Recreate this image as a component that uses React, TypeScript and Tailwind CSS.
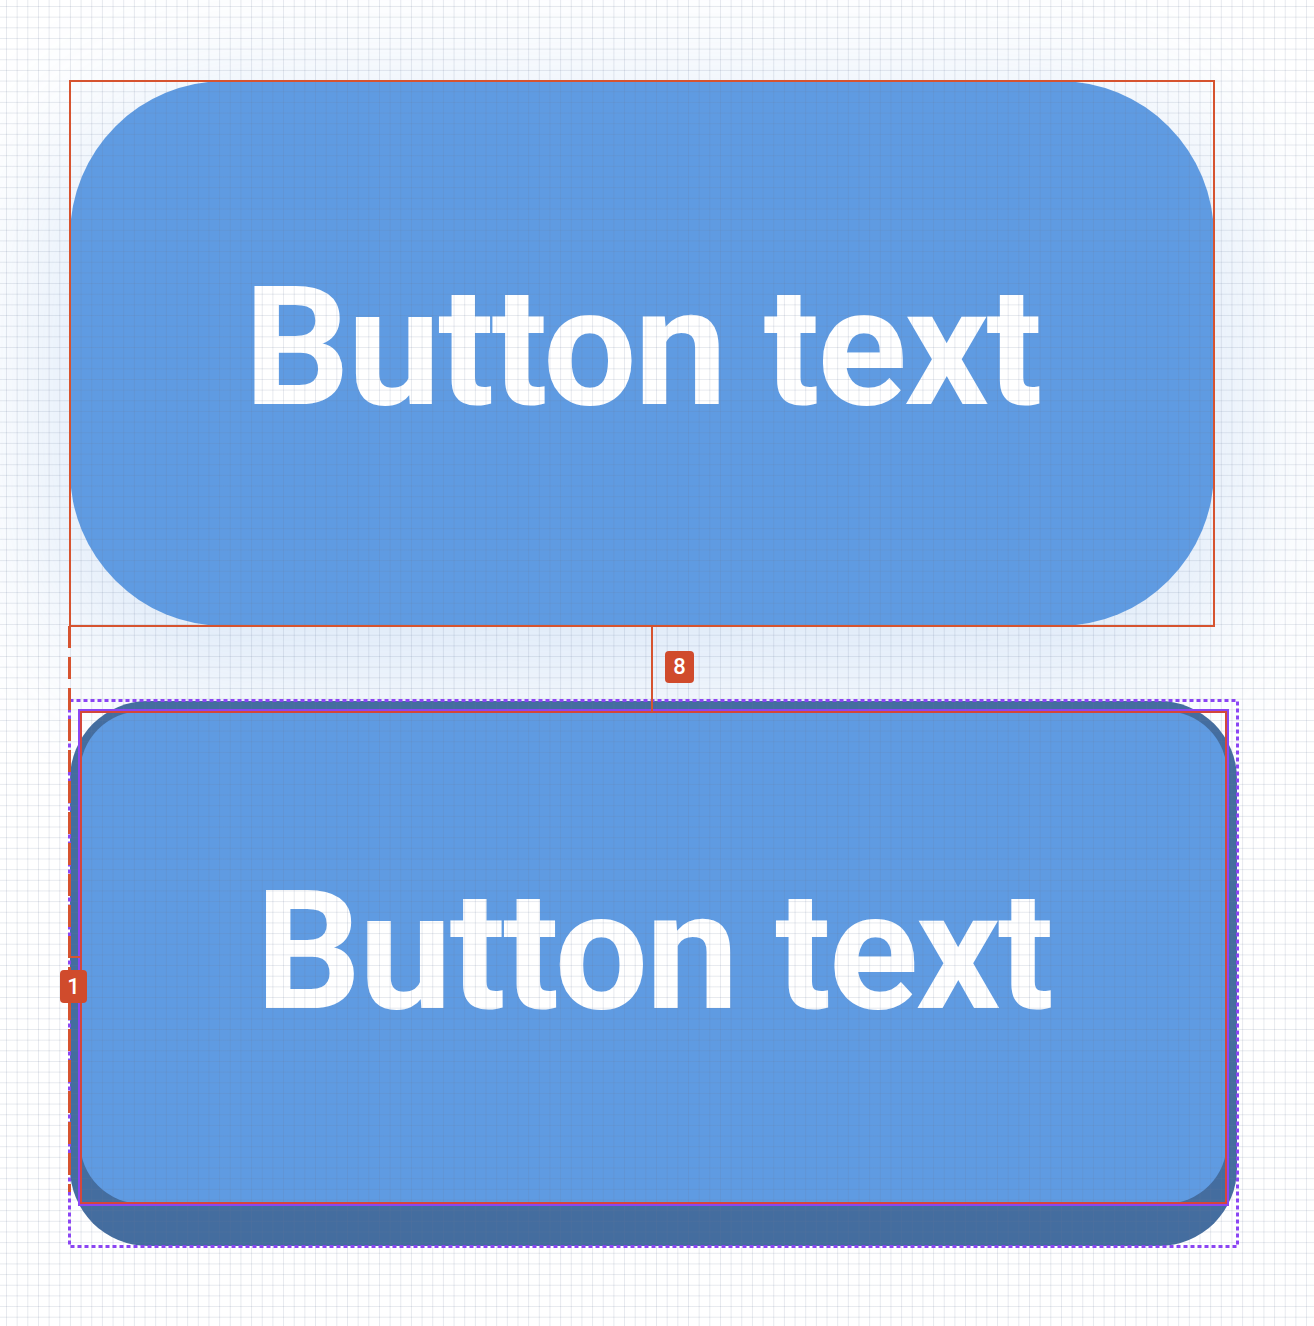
import React from 'react'

const labelFont = { fontFamily: 'Roboto, "Liberation Sans", sans-serif' }

function Badge({ value, className = '' }: { value: string; className?: string }) {
  return (
    <div
      className={`flex items-center justify-center rounded-[4px] bg-[#d04b2c] text-[22px] font-medium leading-none text-white ${className}`}
      style={labelFont}
    >
      {value}
    </div>
  )
}

// dotted bounding box drawn around the raised button
function DottedFrame() {
  return (
    <svg className="pointer-events-none absolute -inset-[2px] z-20 h-[calc(100%+4px)] w-[calc(100%+4px)] overflow-visible">
      <rect
        x="1.5"
        y="1.5"
        width="calc(100% - 3px)"
        height="calc(100% - 3px)"
        fill="none"
        stroke="#8b45f3"
        strokeWidth="3"
        strokeDasharray="4 3"
      />
    </svg>
  )
}

export default function App() {
  return (
    <div
      className="relative h-[1326px] w-[1314px] overflow-hidden bg-white"
      style={labelFont}
    >
      <div className="flex flex-col items-start pl-[70px] pt-[81px]">
        {/* Flat pill button with its spacing guide */}
        <div className="relative">
          <button className="flex h-[545px] w-[1144px] items-center justify-center rounded-[155px] bg-[#5f9be2] pb-[12px] text-[166px] font-bold leading-none tracking-[-2.5px] text-white shadow-[0_40px_140px_20px_rgba(74,140,222,0.2)]">
            Button text
          </button>
          <div className="pointer-events-none absolute -inset-[1px] z-20 border-2 border-[#d6532f]" />

          {/* gap measurement */}
          <div className="pointer-events-none absolute left-[581px] top-full z-30 flex h-[86px] items-center gap-[12px]">
            <div className="h-full w-[2px] bg-[#d6532f]" />
            <Badge value="8" className="-mt-[4px] h-[32px] w-[29px]" />
          </div>

          <div className="pointer-events-none absolute -left-[2px] top-full z-30 h-[566px] w-[3px] bg-[repeating-linear-gradient(to_bottom,#d6532f_0_22px,transparent_22px_31px)]" />
        </div>

        {/* Raised button with a darker base */}
        <div className="relative mt-[75px] flex h-[545px] w-[1167px] rounded-[78px] bg-[#446d9f] px-[10px] pb-[42px] pt-[10px]">
          <div className="relative flex flex-1">
            <button className="flex flex-1 items-center justify-center rounded-[62px] bg-[#5f9be2] pb-[12px] text-[166px] font-bold leading-none tracking-[-2.5px] text-white">
              Button text
            </button>
            <div className="pointer-events-none absolute -inset-[2px] z-20 border-2 border-[#8b45f3]" />
            <div className="pointer-events-none absolute inset-0 z-20 border-2 border-[#d4473a]" />
          </div>
          <DottedFrame />

          {/* side inset marker */}
          <div className="pointer-events-none absolute -left-[10px] top-[255px] z-30 flex flex-col items-start gap-[12px]">
            <div className="ml-[9px] h-[2px] w-[11px] bg-[#d6532f]" />
            <Badge value="1" className="h-[33px] w-[27px]" />
          </div>
        </div>
      </div>

      {/* Grid overlay */}
      <div className="pointer-events-none absolute inset-0 z-10 bg-[linear-gradient(to_right,rgba(105,120,150,0.16)_1px,transparent_1px),linear-gradient(to_bottom,rgba(105,120,150,0.16)_1px,transparent_1px)] bg-[size:10.667px_10.667px] bg-[position:6px_6px]" />
    </div>
  )
}
